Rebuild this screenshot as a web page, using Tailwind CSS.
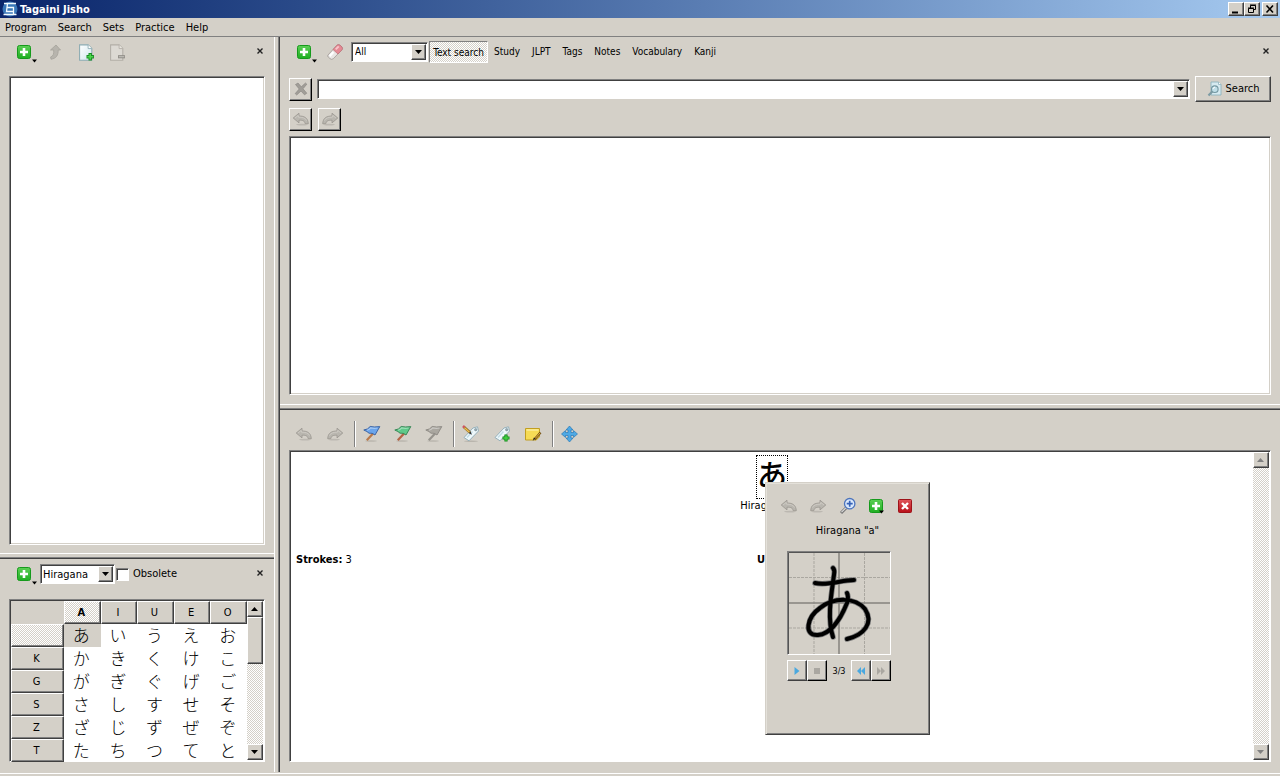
<!DOCTYPE html>
<html lang="en">
<head>
<meta charset="utf-8">
<title>Tagaini Jisho</title>
<script src="https://cdn.jsdelivr.net/npm/@tailwindcss/browser@4"></script>
</head>
<body class="relative flex h-screen flex-col overflow-hidden bg-[#d4d0c8] font-['DejaVu_Sans_Condensed','Liberation_Sans','Noto_Sans_CJK_JP',sans-serif] text-[11px] leading-4 text-black">

<svg class="absolute size-0" aria-hidden="true">
  <defs>
    <linearGradient id="gGreen" x1="0" y1="0" x2="0" y2="1"><stop offset="0" stop-color="#5ccf55"/><stop offset="1" stop-color="#1fae22"/></linearGradient>
    <linearGradient id="gRed" x1="0" y1="0" x2="0" y2="1"><stop offset="0" stop-color="#e0555a"/><stop offset="1" stop-color="#b80f18"/></linearGradient>
    <linearGradient id="gPage" x1="0" y1="0" x2="1" y2="1"><stop offset="0" stop-color="#ffffff"/><stop offset="1" stop-color="#cfe6ee"/></linearGradient>
    <symbol id="add" viewBox="0 0 16 16"><rect x="1.500" y="1.500" width="13" height="13" rx="2" fill="url(#gGreen)" stroke="#169a1c"/><path d="M8 4v8M4 8h8" stroke="#fff" stroke-width="2.600"/></symbol>
    <symbol id="close-red" viewBox="0 0 16 16"><rect x="1.500" y="1.500" width="13" height="13" rx="1" fill="url(#gRed)" stroke="#9d1218"/><path d="M5 5l6 6M11 5l-6 6" stroke="#fff" stroke-width="2.400"/></symbol>
    <symbol id="up" viewBox="0 0 16 16"><path d="M9 1L13.500 6H11.200C11.300 11 9.500 14.500 4 15.200L3.600 13C6.300 12 6.900 10 6.700 6H3.500z" fill="#b7b4ad" stroke="#a5a29b" stroke-width=".8"/></symbol>
    <symbol id="page-add" viewBox="0 0 16 16"><path d="M1.500 .8h8l3.500 3.500v11H1.500z" fill="url(#gPage)" stroke="#8cabb2"/><path d="M9.500 .8v3.500h3.500" fill="#fff" stroke="#8cabb2" stroke-width=".8"/><path d="M11.500 8.500v7M8 12h7" stroke="#198c22" stroke-width="3.200"/><path d="M11.500 9.300v5.400M8.800 12h5.400" stroke="#4bd64c" stroke-width="1.500"/></symbol>
    <symbol id="page-del" viewBox="0 0 16 16"><path d="M1.500 .8h8l3.500 3.500v11H1.500z" fill="#dcd9d3" stroke="#b2aea7"/><path d="M9.500 .8v3.500h3.500" fill="#e8e5df" stroke="#b2aea7" stroke-width=".8"/><path d="M8.500 12h6.500" stroke="#8f8c87" stroke-width="3"/><path d="M9.300 12h5" stroke="#c7c4be"/></symbol>
    <symbol id="eraser" viewBox="0 0 18 18"><path d="M2 12L11 2.200Q12.500 1 14 2.200L16 4Q17 5.500 16 6.800L7.200 15.800Q5.500 17 4 15.600L2.200 14Q1.200 13 2 12z" fill="#e9e7e5" stroke="#9f9894" stroke-width=".8"/><path d="M7 6.500L11 2.200Q12.500 1 14 2.200L16 4Q17 5.500 16 6.800L12 11z" fill="#e58a94" stroke="#bd6b74" stroke-width=".7"/><path d="M9 5.800l3-3 1.400 1.100-3 3.200z" fill="#f9c5ca"/><path d="M3 12.300l3.600-4 1.600 1.500-3.800 4.200z" fill="#fff"/></symbol>
    <symbol id="undo" viewBox="0 0 18 16"><path d="M1.200 7L7 2.200V5c5.500 0 9 2 9.300 7.700h-3.200c-.3-2.700-2-3.600-6.100-3.500v2.700z" fill="#b9b6af" stroke="#99968f" stroke-width=".8"/><path d="M3 7l3.300-2.600v1.700c4 0 7 .8 8.400 3.500" fill="none" stroke="#cfccc5" stroke-width=".9"/><ellipse cx="10" cy="13.600" rx="6" ry=".8" fill="#bcb8b1"/></symbol>
    <symbol id="redo" viewBox="0 0 18 16"><path d="M16.800 7L11 2.200V5C5.500 5 2 7 1.700 12.700h3.200c.3-2.700 2-3.600 6.100-3.500v2.700z" fill="#b9b6af" stroke="#99968f" stroke-width=".8"/><path d="M15 7l-3.300-2.600v1.700c-4 0-7 .8-8.400 3.500" fill="none" stroke="#cfccc5" stroke-width=".9"/><ellipse cx="8" cy="13.600" rx="6" ry=".8" fill="#bcb8b1"/></symbol>
    <symbol id="clear" viewBox="0 0 16 16"><path d="M2.500 3.500L5 2l3.300 3.800L12.500 2l1.300 1.200L10 7.800l3.800 4.400-2.300 1.600L8 10l-4.300 4-1.500-1.400L6.200 8z" fill="#a19e98" stroke="#85827d" stroke-width=".6"/></symbol>
    <symbol id="find" viewBox="0 0 16 16"><path d="M4 1h7.500L14 3.500V14H4z" fill="#d6eaf0" stroke="#8fb3bd" stroke-width=".9"/><path d="M11.500 1v2.500H14" fill="#fff" stroke="#8fb3bd" stroke-width=".8"/><path d="M5.300 10.500L1.500 14.500" stroke="#7d9ba4" stroke-width="2.200"/><circle cx="7.800" cy="8.200" r="3.300" fill="#c0dfe8" stroke="#7497a1" stroke-width="1.100"/><path d="M6 8q.3-1.800 2-1.900" fill="none" stroke="#fff"/></symbol>
    <symbol id="flag" viewBox="0 0 18 18"><ellipse cx="8" cy="16" rx="6" ry=".8" fill="#b9b5ad"/><path d="M10.500 8L3.800 15.300" class="stroke-[var(--pole)]" stroke-width="2.200"/><path d="M.8 5Q5 4.600 7.200 1.500Q11 2.400 16.800 1.600L12 10Q9.500 7.600 6 8.200Q4.500 6.500 .8 5z" fill="currentColor" class="stroke-[var(--rim)]" stroke-width=".9"/><path d="M4 5.300Q6.500 4.500 7.800 2.900Q11 3.600 14.500 3" fill="none" stroke="#fff" stroke-opacity=".4" stroke-width="1.200"/></symbol>
    <symbol id="tag" viewBox="0 0 18 18"><path d="M2 12.500L11 3l4.500-1.200 1 4.200L7 15.800z" fill="#eef8fb" stroke="#8daab5" stroke-width=".9"/><circle cx="13.700" cy="4.700" r="1.200" fill="#9aacb3" stroke="#667f88" stroke-width=".5"/><path d="M5 12.500l5.500-6" stroke="#c3dce6" stroke-width="1.500"/></symbol>
    <symbol id="tag-edit" viewBox="0 0 18 18"><ellipse cx="9" cy="16.300" rx="7" ry=".8" fill="#b9b5ad"/><use href="#tag"/><path d="M2 2L8 7.500" stroke="#8b6a26" stroke-width="2.600"/><path d="M2.300 2.600L7.500 7.300" stroke="#f0bf4e" stroke-width="1.300"/><path d="M8.500 6.500l1.500 3.200L6.800 8.200z" fill="#333"/><path d="M1 1l1.500 1.500" stroke="#cf5560" stroke-width="2.500"/></symbol>
    <symbol id="tag-add" viewBox="0 0 18 18"><use href="#tag"/><path d="M13 9.500v7M9.500 13h7" stroke="#118a1b" stroke-width="3.200"/><path d="M13 10.300v5.400M10.300 13h5.400" stroke="#43d344" stroke-width="1.400"/></symbol>
    <symbol id="note" viewBox="0 0 18 18"><path d="M1.500 3.500h14v8.300L12.300 15H1.500z" fill="#f6db55" stroke="#c29e20"/><path d="M2.500 5h12" stroke="#fbee9d" stroke-width="1.500"/><path d="M16.500 7.500l-6 7" stroke="#755214" stroke-width="2.400"/><path d="M16 8l-5 5.700" stroke="#e3ad3c" stroke-width="1"/><path d="M11.500 13.200L8.700 16l1.200-3.600z" fill="#222"/></symbol>
    <symbol id="move" viewBox="0 0 18 18"><path d="M8.500 1L12 5H10v2.500h2.500v-2l4 3.500-4 3.500v-2H10V13h2l-3.500 4L5 13h2v-2.500H4.500v2L.5 9l4-3.500v2H7V5H5z" fill="#4ea9e5" stroke="#1d6eae" stroke-width=".6"/></symbol>
    <symbol id="zoom" viewBox="0 0 18 18"><path d="M7 11L2 16" stroke="#777" stroke-width="3"/><path d="M6.700 11L2.500 15.200" stroke="#ddd" stroke-width="1.100"/><circle cx="10.700" cy="6.700" r="5.200" fill="#dbe9fb" stroke="#4c74bd" stroke-width="1.300"/><path d="M10.700 3.700v6M7.700 6.700h6" stroke="#3562b8" stroke-width="1.700"/></symbol>
    <symbol id="down" viewBox="0 0 8 4"><path d="M0 0h7L3.500 4z" fill="currentColor"/></symbol>
    <symbol id="down-small" viewBox="0 0 6 4"><path d="M0 .5h5L2.500 3.500z" fill="currentColor"/></symbol>
    <symbol id="upward" viewBox="0 0 8 4"><path d="M0 4h7L3.500 0z" fill="currentColor"/></symbol>
    <symbol id="x" viewBox="0 0 8 8"><path d="M1.500 1.500l5 5M6.500 1.500l-5 5" stroke="#222" stroke-width="1.400"/></symbol>
  </defs>
</svg>

<header class="flex h-[18px] shrink-0 items-center bg-linear-to-r from-[#0a246a] to-[#a6caf0] pr-0.5 pl-0.5">
  <svg class="size-4" viewBox="0 0 16 16" aria-hidden="true"><circle cx="8" cy="8" r="7.500" fill="#3976b8"/><path d="M2 2.500h12M5.500 2.500L4.500 10.500H11M5 6.500H11.500V13.500M1.500 13.500h13" fill="none" stroke="#f3faff" stroke-width="1.300"/></svg>
  <h1 class="ml-0.5 pt-px font-bold text-white">Tagaini Jisho</h1>
  <div class="ml-auto flex">
    <button aria-label="Minimize" class="flex h-3.5 w-4 items-center justify-center border border-white border-r-[#404040] border-b-[#404040] bg-[#d4d0c8] shadow-[inset_-1px_-1px_0_#808080]"><svg class="h-3 w-3" viewBox="0 0 12 12"><path d="M2 9.500h6" stroke="#000" stroke-width="2"/></svg></button>
    <button aria-label="Restore" class="flex h-3.5 w-4 items-center justify-center border border-white border-r-[#404040] border-b-[#404040] bg-[#d4d0c8] shadow-[inset_-1px_-1px_0_#808080]"><svg class="h-3 w-3" viewBox="0 0 12 12"><path d="M4.500 5V2.500h5v4H8M4 2h6M2.500 5.500h5v4h-5zM2 5h6" fill="none" stroke="#000"/></svg></button>
    <button aria-label="Close" class="ml-0.5 flex h-3.5 w-4 items-center justify-center border border-white border-r-[#404040] border-b-[#404040] bg-[#d4d0c8] shadow-[inset_-1px_-1px_0_#808080]"><svg class="h-3 w-3" viewBox="0 0 12 12"><path d="M2.500 2.500l6.500 7M9 2.500l-6.500 7" stroke="#000" stroke-width="1.600"/></svg></button>
  </div>
</header>

<nav class="flex h-[19px] shrink-0 items-center gap-[11px] border-b border-[#808080] px-[5px] pt-0.5">
  <button>Program</button><button>Search</button><button>Sets</button><button>Practice</button><button>Help</button>
</nav>

<div class="flex min-h-0 flex-1">
  <aside class="flex w-[274px] shrink-0 flex-col">
    <section class="flex min-h-0 flex-1 flex-col px-[9px] pb-2">
      <div class="flex h-[39px] shrink-0 items-start pt-[7px] pl-[7px]">
        <button aria-label="Add" class="flex w-[31px]"><svg class="size-4"><use href="#add"/></svg><svg class="mt-[15px] h-1 w-1.5"><use href="#down-small"/></svg></button>
        <button aria-label="Up" class="w-[31px]" disabled><svg class="size-4"><use href="#up"/></svg></button>
        <button aria-label="New set" class="w-[31px]"><svg class="size-[17px]"><use href="#page-add"/></svg></button>
        <button aria-label="Remove set" disabled><svg class="size-[17px]"><use href="#page-del"/></svg></button>
        <button aria-label="Close sets" class="mt-[3px] mr-px ml-auto"><svg class="size-2"><use href="#x"/></svg></button>
      </div>
      <div class="flex-1 border border-[#808080] border-r-white border-b-white bg-white shadow-[inset_1px_1px_0_#404040,inset_-1px_-1px_0_#d4d0c8]"></div>
    </section>
    <div class="h-1.5 shrink-0 border-t border-b border-t-white border-b-[#404040] shadow-[inset_0_-1px_0_#808080]"></div>
    <section class="h-[213px] shrink-0 px-[9px]">
      <div class="flex h-10 items-start pt-[5px] pl-[7px]">
        <button aria-label="Add kana" class="flex w-6 pt-0.5"><svg class="size-4 shrink-0"><use href="#add"/></svg><svg class="mt-[15px] h-1 w-1.5 shrink-0"><use href="#down-small"/></svg></button>
        <div class="relative h-5 w-[75px]">
          <select aria-label="Syllabary" class="block h-5 w-full appearance-none border border-[#808080] border-r-white border-b-white bg-white pt-px pl-[2px] shadow-[inset_1px_1px_0_#404040]"><option>Hiragana</option></select>
          <span class="pointer-events-none absolute top-0.5 right-0.5 bottom-0.5 flex w-[15px] items-center justify-center border border-white border-r-[#404040] border-b-[#404040] bg-[#d4d0c8] shadow-[inset_-1px_-1px_0_#808080]"><svg class="h-1 w-2"><use href="#down"/></svg></span>
        </div>
        <label class="ml-px flex h-5 items-center gap-1"><input type="checkbox" class="size-[13px] appearance-none border border-[#808080] border-r-white border-b-white bg-white shadow-[inset_1px_1px_0_#404040]">Obsolete</label>
        <button aria-label="Close kana" class="mt-[5px] mr-px ml-auto"><svg class="size-2"><use href="#x"/></svg></button>
      </div>
      <div class="flex h-[163px] border border-[#808080] border-r-white border-b-white bg-white p-px shadow-[inset_1px_1px_0_#404040]">
        <table class="h-[159px] flex-1 table-fixed border-separate border-spacing-0 [&_td]:h-[23px] [&_td]:p-0 [&_td]:pr-0.5 [&_td]:pb-[3px] [&_td]:text-center [&_td]:font-['Noto_Sans_CJK_JP',sans-serif] [&_td]:text-[17px] [&_td]:leading-[19px] [&_td]:font-light [&_th]:h-[23px] [&_th]:border [&_th]:border-white [&_th]:border-r-[#404040] [&_th]:border-b-[#404040] [&_th]:p-0 [&_th]:pr-0.5 [&_th]:font-normal [&_th]:shadow-[inset_-1px_-1px_0_#808080]">
          <colgroup><col class="w-[53px]"><col><col><col><col><col></colgroup>
          <thead><tr class="bg-[#d4d0c8]"><td></td><th class="bg-[repeating-conic-gradient(#fff_0_25%,#d4d0c8_0_50%)] bg-[length:2px_2px]"><b>A</b></th><th>I</th><th>U</th><th>E</th><th>O</th></tr></thead>
          <tbody>
            <tr><th class="bg-[repeating-conic-gradient(#fff_0_25%,#d4d0c8_0_50%)] bg-[length:2px_2px]"></th><td class="bg-[#d4d0c8]">あ</td><td>い</td><td>う</td><td>え</td><td>お</td></tr>
            <tr><th class="bg-[#d4d0c8]">K</th><td>か</td><td>き</td><td>く</td><td>け</td><td>こ</td></tr>
            <tr><th class="bg-[#d4d0c8]">G</th><td>が</td><td>ぎ</td><td>ぐ</td><td>げ</td><td>ご</td></tr>
            <tr><th class="bg-[#d4d0c8]">S</th><td>さ</td><td>し</td><td>す</td><td>せ</td><td>そ</td></tr>
            <tr><th class="bg-[#d4d0c8]">Z</th><td>ざ</td><td>じ</td><td>ず</td><td>ぜ</td><td>ぞ</td></tr>
            <tr><th class="bg-[#d4d0c8]">T</th><td>た</td><td>ち</td><td>つ</td><td>て</td><td>と</td></tr>
          </tbody>
        </table>
        <div class="flex w-4 flex-col bg-[repeating-conic-gradient(#fff_0_25%,#d4d0c8_0_50%)] bg-[length:2px_2px]">
          <button aria-label="Scroll up" class="flex h-4 items-center justify-center border border-white border-r-[#404040] border-b-[#404040] bg-[#d4d0c8] shadow-[inset_-1px_-1px_0_#808080]"><svg class="h-1 w-2"><use href="#upward"/></svg></button>
          <div class="h-[47px] border border-white border-r-[#404040] border-b-[#404040] bg-[#d4d0c8] shadow-[inset_-1px_-1px_0_#808080]"></div>
          <button aria-label="Scroll down" class="mt-auto flex h-4 items-center justify-center border border-white border-r-[#404040] border-b-[#404040] bg-[#d4d0c8] shadow-[inset_-1px_-1px_0_#808080]"><svg class="h-1 w-2"><use href="#down"/></svg></button>
        </div>
      </div>
    </section>
  </aside>

  <div class="w-1.5 shrink-0 border-r border-l border-l-white border-r-[#404040] shadow-[inset_-1px_0_0_#808080]"></div>

  <main class="flex min-w-0 flex-1 flex-col">
    <section class="flex min-h-0 flex-1 flex-col px-[9px] pb-[9px]">
      <div class="flex h-[39px] shrink-0 items-start pt-1 pl-[7px]">
        <button aria-label="Add filter" class="flex w-[30px] pt-[3px]"><svg class="size-4"><use href="#add"/></svg><svg class="mt-[15px] h-1 w-1.5"><use href="#down-small"/></svg></button>
        <button aria-label="Reset search" class="w-[25px] pt-0.5"><svg class="size-[18px]"><use href="#eraser"/></svg></button>
        <div class="relative mt-px h-5 w-[77px]">
          <select aria-label="Entry type" class="block h-5 w-full appearance-none border border-[#808080] border-r-white border-b-white bg-white pl-[3px] text-[10px] shadow-[inset_1px_1px_0_#404040]"><option>All</option></select>
          <span class="pointer-events-none absolute top-0.5 right-0.5 bottom-0.5 flex w-[15px] items-center justify-center border border-white border-r-[#404040] border-b-[#404040] bg-[#d4d0c8] shadow-[inset_-1px_-1px_0_#808080]"><svg class="h-1 w-2"><use href="#down"/></svg></span>
        </div>
        <div class="ml-px flex h-[22px] items-center gap-3 text-[10px]">
          <button class="-mr-1.5 h-[22px] w-[59px] border border-[#808080] border-r-white border-b-white bg-[repeating-conic-gradient(#fff_0_25%,#d4d0c8_0_50%)] bg-[length:2px_2px] pt-px whitespace-nowrap">Text search</button>
          <button>Study</button><button>JLPT</button><button>Tags</button><button>Notes</button><button>Vocabulary</button><button>Kanji</button>
        </div>
        <button aria-label="Close search" class="mt-1.5 mr-px ml-auto"><svg class="size-2"><use href="#x"/></svg></button>
      </div>
      <div class="flex h-[26px] shrink-0 items-center gap-[5px]">
        <button aria-label="Clear text" class="flex size-[23px] items-center justify-center border border-white border-r-black border-b-black shadow-[inset_-1px_-1px_0_#808080]"><svg class="size-4"><use href="#clear"/></svg></button>
        <div class="relative h-5 flex-1">
          <input aria-label="Search text" type="text" class="block h-5 w-full border border-[#808080] border-r-white border-b-white bg-white px-1 shadow-[inset_1px_1px_0_#404040]">
          <button aria-label="Search history" class="absolute top-0.5 right-0.5 bottom-0.5 flex w-[15px] items-center justify-center border border-white border-r-[#404040] border-b-[#404040] bg-[#d4d0c8] shadow-[inset_-1px_-1px_0_#808080]"><svg class="h-1 w-2"><use href="#down"/></svg></button>
        </div>
        <button class="flex h-[26px] w-[76px] items-center justify-center gap-[3px] border border-white border-r-[#404040] border-b-[#404040] shadow-[inset_-1px_-1px_0_#808080]"><svg class="size-4"><use href="#find"/></svg>Search</button>
      </div>
      <div class="flex h-[34px] shrink-0 items-center gap-1.5">
        <button aria-label="Previous search" disabled class="flex size-[23px] items-center justify-center border border-white border-r-black border-b-black shadow-[inset_-1px_-1px_0_#808080]"><svg class="h-4 w-[18px]"><use href="#undo"/></svg></button>
        <button aria-label="Next search" disabled class="flex size-[23px] items-center justify-center border border-white border-r-black border-b-black shadow-[inset_-1px_-1px_0_#808080]"><svg class="h-4 w-[18px]"><use href="#redo"/></svg></button>
      </div>
      <div class="flex-1 border border-[#808080] border-r-white border-b-white bg-white shadow-[inset_1px_1px_0_#404040,inset_-1px_-1px_0_#d4d0c8]"></div>
    </section>
    <div class="h-1.5 shrink-0 border-t border-b border-t-white border-b-[#404040] shadow-[inset_0_-1px_0_#808080]"></div>

    <section class="flex h-[362px] shrink-0 flex-col px-[9px] pb-2.5">
      <div class="flex h-10 shrink-0 items-center pt-2 pl-1.5">
        <button aria-label="Back" disabled class="w-[31px]"><svg class="h-4 w-[18px]"><use href="#undo"/></svg></button>
        <button aria-label="Forward" disabled><svg class="h-4 w-[18px]"><use href="#redo"/></svg></button>
        <span class="mr-[7px] ml-2.5 h-[26px] w-0.5 border-r border-l border-l-[#808080] border-r-white"></span>
        <button aria-label="Blue flag" class="w-[31px] text-[#6ba5ec] [--pole:#b9794b] [--rim:#315b9f]"><svg class="size-[18px]"><use href="#flag"/></svg></button>
        <button aria-label="Green flag" class="w-[31px] text-[#5fc98a] [--pole:#b46346] [--rim:#30814f]"><svg class="size-[18px]"><use href="#flag"/></svg></button>
        <button aria-label="Clear flag" disabled class="text-[#aaa7a0] [--pole:#96938d] [--rim:#8b8882]"><svg class="size-[18px]"><use href="#flag"/></svg></button>
        <span class="mr-[7px] ml-2.5 h-[26px] w-0.5 border-r border-l border-l-[#808080] border-r-white"></span>
        <button aria-label="Edit tags" class="w-[31px]"><svg class="size-[18px]"><use href="#tag-edit"/></svg></button>
        <button aria-label="Add tag" class="w-[31px]"><svg class="size-[18px]"><use href="#tag-add"/></svg></button>
        <button aria-label="Edit note"><svg class="size-[18px]"><use href="#note"/></svg></button>
        <span class="mr-[7px] ml-2.5 h-[26px] w-0.5 border-r border-l border-l-[#808080] border-r-white"></span>
        <button aria-label="Move"><svg class="size-[18px]"><use href="#move"/></svg></button>
      </div>
      <div class="flex flex-1 border border-[#808080] border-r-white border-b-white bg-white p-px shadow-[inset_1px_1px_0_#404040]">
        <article class="flex flex-1 flex-col items-center pt-[3px]">
          <a href="#kana" class="flex h-11 w-8 items-center justify-center border border-dotted border-black font-['Noto_Sans_CJK_JP',sans-serif] text-[30px] leading-[30px] font-medium"><span class="pb-2">あ</span></a>
          <p class="-mt-px">Hiragana "a"</p>
          <div class="mt-[38px] grid w-full grid-cols-[461px_1fr] pl-[5px]"><p><b>Strokes:</b> 3</p><p><b>Unicode:</b></p></div>
        </article>
        <div class="flex w-4 flex-col justify-between bg-[repeating-conic-gradient(#fff_0_25%,#d4d0c8_0_50%)] bg-[length:2px_2px]">
          <button aria-label="Scroll up" disabled class="flex h-4 items-center justify-center border border-white border-r-[#404040] border-b-[#404040] bg-[#d4d0c8] text-[#808080] shadow-[inset_-1px_-1px_0_#808080]"><svg class="h-1 w-2"><use href="#upward"/></svg></button>
          <button aria-label="Scroll down" disabled class="flex h-4 items-center justify-center border border-white border-r-[#404040] border-b-[#404040] bg-[#d4d0c8] text-[#808080] shadow-[inset_-1px_-1px_0_#808080]"><svg class="h-1 w-2"><use href="#down"/></svg></button>
        </div>
      </div>
    </section>
  </main>
</div>
<footer class="mt-px h-[3px] shrink-0 border-t border-white"></footer>

<div role="dialog" aria-label="Stroke order" id="kana" class="absolute top-[482px] left-[765px] h-[253px] w-[165px] border border-[#d4d0c8] border-r-[#404040] border-b-[#404040] bg-[#d4d0c8] pt-3.5 shadow-[inset_1px_1px_0_#e4e1da,inset_-1px_-1px_0_#808080]">
  <div class="flex h-[18px] items-center pl-3.5">
    <button aria-label="Previous kana" disabled class="w-[29px]"><svg class="h-4 w-[18px]"><use href="#undo"/></svg></button>
    <button aria-label="Next kana" disabled class="w-[30px]"><svg class="h-4 w-[18px]"><use href="#redo"/></svg></button>
    <button aria-label="Zoom in" class="w-[29px]"><svg class="size-[18px]"><use href="#zoom"/></svg></button>
    <button aria-label="Add to study" class="relative w-[29px]"><svg class="size-4"><use href="#add"/></svg><svg class="absolute right-3 bottom-0 h-1 w-1.5"><use href="#down-small"/></svg></button>
    <button aria-label="Close"><svg class="size-4"><use href="#close-red"/></svg></button>
  </div>
  <p class="mt-2 text-center">Hiragana "a"</p>
  <svg class="mt-3 ml-[21px] h-[104px] w-[104px] border border-[#808080] border-r-white border-b-white" viewBox="0 0 102 102" role="img" aria-label="Stroke diagram">
    <path d="M.5 102V.5H102" fill="none" stroke="#555"/>
    <path d="M26 1v101M76.500 1v101M1 25.500h101M1 76h101" stroke="#aaa7a0" stroke-dasharray="3 1"/>
    <path d="M51 1v101M1 51h101" stroke="#85837e" stroke-width="1.500"/>
    <g fill="none" stroke-linecap="round" stroke-linejoin="round">
      <g stroke="#777" stroke-width="5.500"><path d="M27 31C40 34 53 28 66 28"/><path d="M45 16Q47 18 46 23C43 44 39 67 45 85"/><path d="M59 41Q61 45 59 51C53 66 43 82 30 83C15 84 19 65 32 56C46 45 67 45 77 57C86 71 76 83 59 87"/></g>
      <g stroke="#000" stroke-width="4"><path d="M27 31C40 34 53 28 66 28"/><path d="M45 16Q47 18 46 23C43 44 39 67 45 85"/><path d="M59 41Q61 45 59 51C53 66 43 82 30 83C15 84 19 65 32 56C46 45 67 45 77 57C86 71 76 83 59 87"/></g>
    </g>
  </svg>
  <div class="mt-[5px] ml-[21px] flex h-[21px] w-[104px] items-center text-[9px]">
    <button aria-label="Play" class="flex h-[21px] w-5 items-center justify-center border border-white border-r-[#404040] border-b-[#404040] shadow-[inset_-1px_-1px_0_#808080]"><svg class="size-2.5" viewBox="0 0 10 10"><path d="M2.500 1l5 4-5 4z" fill="#4aa8df"/></svg></button>
    <button aria-label="Stop" disabled class="flex h-[21px] w-5 items-center justify-center border border-white border-r-black border-b-black shadow-[inset_-1px_-1px_0_#808080]"><svg class="size-2.5" viewBox="0 0 10 10"><path d="M2 2h6v6H2z" fill="#aaa7a1"/></svg></button>
    <span class="flex-1 text-center">3/3</span>
    <button aria-label="Previous stroke" class="flex h-[21px] w-5 items-center justify-center border border-white border-r-[#404040] border-b-[#404040] shadow-[inset_-1px_-1px_0_#808080]"><svg class="size-2.5" viewBox="0 0 10 10"><path d="M5 1v8L1 5zM9 1v8L5 5z" fill="#4aa8df"/></svg></button>
    <button aria-label="Next stroke" disabled class="flex h-[21px] w-5 items-center justify-center border border-white border-r-black border-b-black shadow-[inset_-1px_-1px_0_#808080]"><svg class="size-2.5" viewBox="0 0 10 10"><path d="M1 1v8l4-4zM5 1v8l4-4z" fill="#aaa7a1"/></svg></button>
  </div>
</div>
</body>
</html>
